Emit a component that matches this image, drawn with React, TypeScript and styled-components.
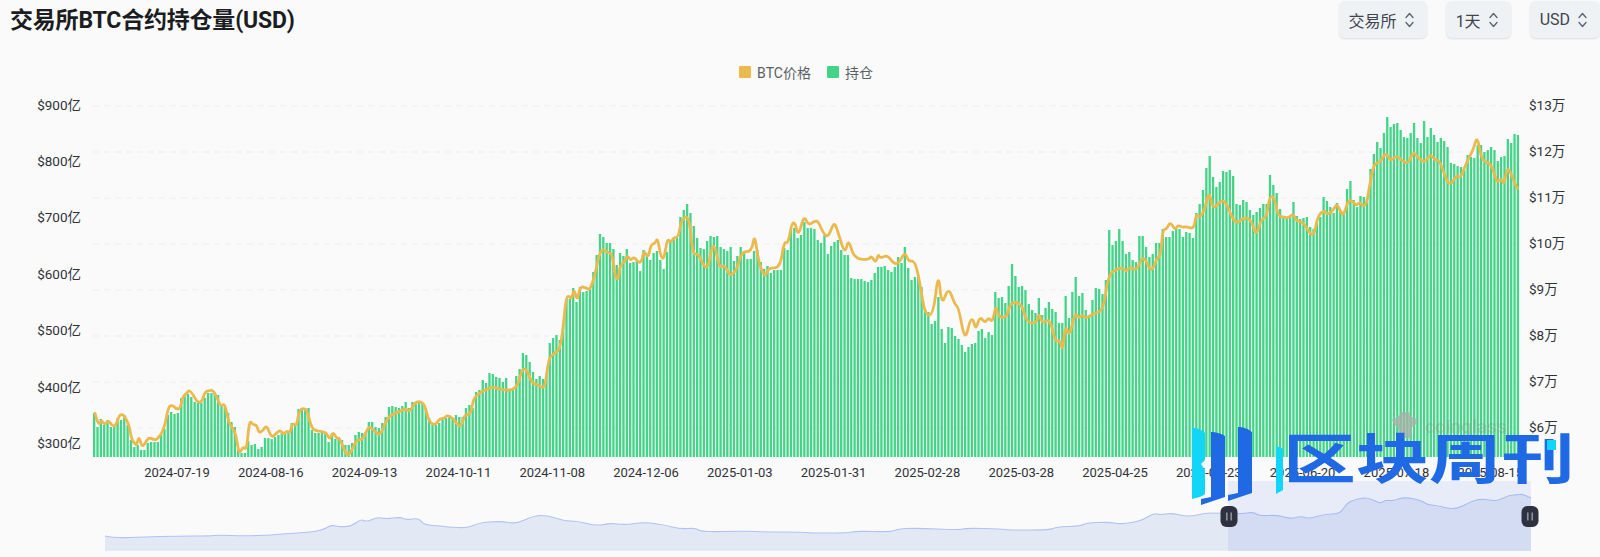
import { useMemo } from "react";
import styled, { createGlobalStyle } from "styled-components";

const FONT = `Roboto, "Noto Sans CJK SC", sans-serif`;

const BASELINE = 457;
const FIRST_BAR_X = 94;
const BAR_STEP = 3.35;

// open interest, top of each daily bar in chart px
const OI_TOPS = [
  413, 427, 419, 425, 420, 427, 425, 418, 420, 415, 425, 440, 447, 445, 450, 450, 443, 442, 442, 442,
  435, 429, 415, 412, 414, 413, 398, 396, 394, 397, 402, 403, 403, 398, 393, 393, 393, 395, 406, 407,
  413, 422, 427, 450, 453, 453, 441, 445, 444, 449, 447, 438, 438, 439, 437, 435, 433, 433, 433, 423,
  426, 409, 408, 408, 408, 430, 433, 433, 432, 432, 442, 433, 439, 437, 440, 445, 445, 443, 435, 432,
  433, 432, 422, 422, 427, 428, 423, 417, 407, 406, 407, 408, 406, 402, 408, 402, 403, 403, 403, 408,
  418, 425, 425, 423, 418, 418, 415, 418, 415, 417, 417, 408, 405, 408, 392, 390, 380, 383, 373, 374,
  377, 378, 382, 378, 390, 390, 376, 369, 353, 355, 362, 372, 379, 376, 379, 375, 343, 338, 335, 340,
  325, 299, 299, 288, 302, 287, 292, 291, 289, 272, 255, 234, 237, 243, 243, 249, 265, 253, 256, 249,
  263, 262, 260, 271, 250, 254, 260, 253, 251, 260, 269, 252, 242, 238, 238, 217, 210, 204, 213, 226,
  238, 248, 249, 241, 236, 237, 236, 247, 249, 251, 247, 261, 256, 247, 251, 259, 259, 251, 250, 262,
  269, 266, 273, 270, 270, 270, 248, 250, 228, 228, 238, 235, 222, 228, 228, 229, 240, 243, 235, 254,
  246, 242, 240, 250, 255, 255, 278, 279, 279, 279, 281, 282, 280, 273, 267, 267, 266, 270, 272, 267,
  257, 263, 247, 268, 280, 277, 276, 287, 309, 312, 324, 321, 297, 329, 343, 327, 328, 336, 339, 345,
  352, 347, 344, 343, 331, 329, 338, 332, 335, 292, 298, 297, 303, 286, 264, 276, 287, 286, 290, 304,
  310, 313, 298, 315, 308, 302, 309, 312, 323, 323, 296, 318, 292, 277, 296, 293, 310, 315, 300, 288,
  289, 294, 280, 230, 245, 241, 229, 241, 254, 252, 260, 262, 236, 236, 247, 257, 254, 243, 243, 229,
  237, 237, 231, 229, 229, 237, 232, 233, 238, 213, 204, 190, 168, 156, 177, 187, 182, 171, 172, 170,
  176, 204, 205, 200, 202, 210, 215, 212, 208, 204, 204, 175, 185, 193, 209, 217, 218, 217, 202, 216,
  219, 218, 217, 227, 229, 221, 217, 197, 201, 207, 213, 203, 210, 213, 189, 181, 200, 207, 196, 197,
  197, 169, 154, 142, 148, 133, 117, 127, 124, 123, 130, 137, 138, 133, 123, 138, 143, 121, 137, 128,
  135, 142, 138, 141, 147, 163, 164, 166, 167, 170, 155, 157, 158, 145, 145, 152, 150, 147, 150, 161,
  157, 156, 139, 143, 134, 135,
];

type Pt = [number, number];

// traced pieces of a curve, each measured at 3x from its own origin
const traced = (ox: number, oy: number, pts: Pt[]): Pt[] =>
  pts.map(([x, y]) => [ox + x / 3, oy + y / 3]);

const PRICE: Pt[] = [
  ...traced(90, 340, [
    [15, 220], [25, 258], [35, 240], [45, 255], [55, 240], [68, 260], [78, 255], [88, 225], [100, 223], [110, 240],
    [118, 260], [125, 298], [135, 312], [140, 315], [147, 288], [155, 320], [165, 312], [175, 292], [190, 298], [200, 300],
    [215, 280], [225, 255], [235, 200], [248, 195], [258, 207], [270, 207], [278, 170], [290, 160], [298, 150], [310, 165],
    [322, 187], [335, 187], [345, 155], [358, 152], [368, 150], [380, 170], [392, 200], [405, 190], [415, 245], [425, 260],
    [437, 280], [445, 330], [450, 338], [460, 320], [470, 330], [478, 240], [490, 255], [500, 255], [507, 280], [520, 270],
    [530, 255], [545, 295], [560, 278], [572, 270], [580, 285], [590, 272], [600, 280], [607, 248], [620, 260], [628, 207],
    [650, 205], [662, 255], [672, 272], [700, 275], [710, 280], [720, 300], [728, 275], [740, 295], [750, 295], [762, 330],
    [775, 350], [790, 320], [800, 300], [820, 298], [835, 258], [850, 270], [870, 288], [885, 250], [900, 225], [930, 215],
    [945, 205], [960, 215], [972, 190], [990, 183], [1005, 195], [1015, 240], [1030, 255], [1040, 250], [1050, 235], [1065, 235],
    [1070, 225], [1090, 235], [1105, 258], [1115, 255], [1125, 222], [1142, 225], [1150, 175], [1170, 158],
  ]),
  ...traced(480, 190, [
    [20, 598], [40, 590], [60, 600], [110, 600], [125, 540], [135, 535], [145, 550], [155, 578], [175, 585], [195, 598],
    [205, 505], [225, 488], [240, 478], [250, 410], [258, 322], [268, 318], [275, 328], [282, 295], [292, 335], [300, 288],
    [320, 295], [330, 300], [345, 255], [358, 190], [370, 175], [385, 190], [397, 190], [405, 262], [415, 270], [420, 225],
    [435, 215], [442, 195], [452, 212], [462, 200], [475, 218], [485, 215], [492, 180], [505, 205], [512, 165], [525, 160],
    [533, 143], [542, 200], [552, 208], [562, 145], [572, 158], [582, 142], [595, 142], [605, 85], [628, 78], [638, 195],
    [655, 190], [672, 230], [685, 232], [695, 170], [705, 168], [718, 235], [735, 225], [750, 260], [770, 240], [785, 185],
    [815, 185], [824, 130], [835, 215], [855, 265], [865, 232], [900, 235], [912, 155], [925, 160], [935, 100], [945, 97],
    [955, 140], [972, 75], [985, 107], [1005, 92], [1015, 95], [1030, 130], [1045, 142], [1062, 95], [1072, 120], [1095, 195],
    [1105, 145], [1122, 205], [1165, 210], [1175, 197], [1187, 220], [1195, 192],
  ]),
  ...traced(880, 130, [
    [0, 385], [22, 375], [40, 400], [55, 402], [75, 365], [85, 395], [105, 392], [120, 460], [135, 555], [160, 555],
    [175, 422], [185, 530], [205, 470], [225, 525], [235, 530], [255, 635], [270, 570], [280, 568], [287, 600], [300, 558],
    [315, 580], [325, 562], [338, 578], [347, 525], [355, 560], [380, 565], [392, 515], [425, 520], [440, 578], [470, 580],
    [477, 548], [487, 582], [510, 565], [525, 635], [540, 630], [548, 665], [556, 583], [568, 622], [585, 547], [597, 565],
    [605, 555], [620, 565], [640, 550], [670, 542], [685, 432], [715, 415], [730, 415], [740, 425], [748, 410], [770, 422],
    [785, 385], [795, 385], [810, 420], [820, 415], [830, 385], [842, 378], [848, 298], [860, 298], [870, 275], [885, 300],
    [895, 285], [905, 292], [920, 290], [942, 297], [948, 252], [962, 262], [975, 235], [988, 180], [998, 240], [1025, 210],
    [1040, 220], [1065, 285], [1095, 260], [1115, 272], [1128, 320], [1145, 265], [1160, 262], [1168, 200], [1183, 200], [1195, 260],
    [1210, 260], [1225, 265], [1240, 250], [1250, 275], [1270, 275], [1300, 328], [1312, 262],
  ]),
  ...traced(1300, 100, [
    [70, 330], [85, 345], [100, 330], [110, 312], [120, 330], [130, 350], [145, 298], [160, 305], [170, 318], [178, 305],
    [190, 320], [200, 310], [210, 250], [222, 190], [240, 188], [258, 155], [272, 185], [290, 165], [305, 182], [325, 192],
    [340, 153], [355, 175], [375, 188], [390, 162], [405, 180], [420, 183], [435, 230], [450, 258], [470, 225], [482, 235],
    [500, 185], [520, 150], [532, 105], [545, 185], [575, 190], [590, 250], [603, 235], [612, 255], [623, 197], [640, 240],
    [652, 265],
  ]),
];

const OVERVIEW: Pt[] = [
  [105, 536], [114, 538], [145, 537], [176, 536], [210, 536], [218, 535], [245, 536], [271, 535], [294, 533], [313, 532],
  [325, 529], [331, 525], [340, 527], [352, 526], [361, 519], [367, 522], [377, 517], [386, 519], [400, 517], [407, 520],
  [419, 518], [424, 525], [442, 526], [447, 527], [468, 528], [478, 523], [501, 521], [516, 524], [533, 516], [547, 515],
  [564, 521], [577, 521], [597, 526], [610, 523], [625, 525], [644, 522], [665, 525], [680, 529], [696, 528], [701, 532],
  [745, 531], [766, 532], [803, 532], [808, 533], [848, 533], [855, 531], [891, 532], [898, 529], [916, 528], [959, 530],
  [966, 528], [1001, 529], [1008, 530], [1051, 530], [1055, 527], [1082, 526], [1085, 523], [1109, 522], [1119, 524], [1130, 523],
  [1143, 520], [1154, 513], [1160, 515], [1171, 513], [1189, 517], [1205, 513], [1219, 513],
  [1240, 514], [1253, 512], [1260, 516], [1278, 515], [1290, 519], [1302, 516], [1308, 519], [1325, 514], [1340, 514],
  [1346, 504], [1353, 500], [1368, 497], [1380, 504], [1385, 500], [1393, 501], [1404, 497], [1420, 500], [1428, 505],
  [1435, 505], [1455, 510], [1470, 502], [1480, 499], [1490, 500], [1497, 501], [1510, 495], [1516, 495], [1522, 494], [1531, 498],
];

const smooth = (pts: Pt[]) => {
  let d = `M${pts[0][0]} ${pts[0][1]}`;
  for (let i = 1; i < pts.length - 1; i++) {
    const mx = (pts[i][0] + pts[i + 1][0]) / 2;
    const my = (pts[i][1] + pts[i + 1][1]) / 2;
    d += `Q${pts[i][0]} ${pts[i][1]} ${mx} ${my}`;
  }
  const last = pts[pts.length - 1];
  return `${d}L${last[0]} ${last[1]}`;
};

const LEFT_TICKS = ["$900亿", "$800亿", "$700亿", "$600亿", "$500亿", "$400亿", "$300亿"];
const RIGHT_TICKS = ["$13万", "$12万", "$11万", "$10万", "$9万", "$8万", "$7万", "$6万"];
const DATES = [
  "2024-07-19", "2024-08-16", "2024-09-13", "2024-10-11", "2024-11-08", "2024-12-06", "2025-01-03", "2025-01-31",
  "2025-02-28", "2025-03-28", "2025-04-25", "2025-05-23", "2025-06-20", "2025-07-18", "2025-08-15",
];

const GlobalStyle = createGlobalStyle`
  html, body {
    margin: 0;
    padding: 0;
    background: #fafafa;
  }
`;

const Page = styled.div`
  position: relative;
  width: 1600px;
  height: 557px;
  overflow: hidden;
  background: #fafafa;
  font-family: ${FONT};
`;

const Header = styled.header`
  display: flex;
  align-items: flex-start;
  justify-content: space-between;
  height: 40px;
  padding-left: 10px;
`;

const Title = styled.h1`
  margin: 5px 0 0;
  font-size: 23px;
  line-height: 32px;
  font-weight: 700;
  color: #1b1d22;
  letter-spacing: -0.2px;
`;

const Controls = styled.div`
  display: flex;
  gap: 19px;
  padding-top: 1px;
`;

const SelectButton = styled.button`
  display: flex;
  align-items: center;
  gap: 8px;
  height: 37px;
  padding: 0 13px 0 10px;
  border: none;
  border-radius: 6px;
  background: #eff2f5;
  box-shadow: 0 1px 2px rgba(30, 40, 60, 0.14);
  color: #3f444e;
  font: 400 16px ${FONT};
`;

const UpDown = styled.svg`
  display: block;
  width: 9px;
  height: 18px;
  fill: none;
  stroke: #5f6673;
  stroke-width: 1.4;
  stroke-linecap: round;
  stroke-linejoin: round;
`;

const Legend = styled.div`
  display: flex;
  justify-content: center;
  gap: 16px;
  height: 50px;
  padding: 23px 0 0 12px;
  box-sizing: border-box;
`;

const LegendItem = styled.div`
  display: flex;
  align-items: center;
  gap: 6px;
  height: 18px;
  font-size: 14px;
  color: #5a5f66;
`;

const Swatch = styled.span<{ $color: string }>`
  width: 12px;
  height: 12px;
  border-radius: 1px;
  background: ${(p) => p.$color};
`;

const ChartSvg = styled.svg`
  display: block;
  width: 1600px;
  height: 467px;
`;

const AxisText = styled.text<{ $size?: number }>`
  font-family: ${FONT};
  font-size: ${(p) => p.$size ?? 13}px;
  fill: #2f3238;
`;

const Watermark = styled.text`
  font-family: ${FONT};
  font-size: 19px;
  font-weight: 500;
  fill: #8b948e;
  fill-opacity: 0.35;
`;

const Logo = styled.div`
  position: absolute;
  left: 1190px;
  top: 416px;
  display: flex;
  align-items: flex-start;
`;

const LogoMark = styled.svg`
  display: block;
  width: 100px;
  height: 90px;
`;

const LogoText = styled.div`
  position: absolute;
  left: 93px;
  top: 9px;
  width: 232px;
  font-family: "Noto Sans CJK SC", sans-serif;
  font-size: 54px;
  line-height: 62px;
  font-weight: 700;
  white-space: nowrap;
  color: #1f6ae4;
  transform: scaleX(1.35);
  transform-origin: left top;
`;

const LogoDot = styled.span`
  position: absolute;
  left: 357px;
  top: 24px;
  width: 9px;
  height: 10px;
  background: #12d6f8;
`;

const Chevrons = () => (
  <UpDown viewBox="0 0 9 18">
    <path d="M1 6.5 4.5 2.5 8 6.5" />
    <path d="M1 11.5 4.5 15.5 8 11.5" />
  </UpDown>
);

const SliderHandle = ({ x }: { x: number }) => (
  <g>
    <rect x={x - 8.5} y={506} width={17} height={21} rx={6} fill="#2e3140" />
    <rect x={x - 3} y={512.5} width={1.6} height={8} fill="#8d909b" />
    <rect x={x + 1.4} y={512.5} width={1.6} height={8} fill="#8d909b" />
  </g>
);

const OpenInterestChart = () => {
  const pricePath = useMemo(() => smooth(PRICE), []);
  const overviewPath = useMemo(() => smooth(OVERVIEW), []);

  return (
    <ChartSvg viewBox="0 90 1600 467">
      {RIGHT_TICKS.map((label, i) => (
        <line key={label} x1={93} x2={1519} y1={106 + i * 46} y2={106 + i * 46} stroke="#eeeeee" strokeDasharray="6 5" />
      ))}
      {OI_TOPS.map((top, i) => (
        <rect
          key={i}
          x={FIRST_BAR_X + i * BAR_STEP - 1}
          y={top}
          width={2.3}
          height={BASELINE - top}
          fill="#43d488"
        />
      ))}
      <path d={pricePath} fill="none" stroke="#ecb94f" strokeWidth={2.8} strokeLinejoin="round" strokeLinecap="round" />

      <g fill="#a7b2aa" fillOpacity={0.8}>
        <path d="M1392 419c5-1 8-3 9-7h8c1 4 4 6 9 7-1 5-3 7-6 8l-1 11h-12l-1-11c-3-1-5-3-6-8z" />
      </g>
      <Watermark x={1425} y={433}>coinglass</Watermark>

      {LEFT_TICKS.map((label, i) => (
        <AxisText key={label} $size={13.5} x={81} y={109.5 + i * 56.4} textAnchor="end">{label}</AxisText>
      ))}
      {RIGHT_TICKS.map((label, i) => (
        <AxisText key={label} $size={13.5} x={1529} y={109.5 + i * 46}>{label}</AxisText>
      ))}
      {DATES.map((label, i) => (
        <AxisText key={label} x={177 + i * 93.8} y={477} textAnchor="middle">{label}</AxisText>
      ))}

      <path d={`${overviewPath}L1531 551L105 551Z`} fill="#e3e8f5" />
      <path d={overviewPath} fill="none" stroke="#b0c3f2" strokeWidth={1.1} />
      <rect x={1228} y={481} width={303} height={70} fill="#6d8cf0" fillOpacity={0.12} />
      <SliderHandle x={1229} />
      <SliderHandle x={1530} />
    </ChartSvg>
  );
};

export default function App() {
  return (
    <Page>
      <GlobalStyle />
      <Header>
        <Title>交易所BTC合约持仓量(USD)</Title>
        <Controls>
          <SelectButton>交易所<Chevrons /></SelectButton>
          <SelectButton>1天<Chevrons /></SelectButton>
          <SelectButton>USD<Chevrons /></SelectButton>
        </Controls>
      </Header>
      <Legend>
        <LegendItem><Swatch $color="#ecb94f" />BTC价格</LegendItem>
        <LegendItem><Swatch $color="#43d488" />持仓</LegendItem>
      </Legend>
      <OpenInterestChart />
      <Logo>
        <LogoMark viewBox="0 0 100 90">
          <path d="M2 12c5 0 11 2 13 5v27l-4 4 4 6v24c-2 2-8 4-13 5z" fill="#12d6f8" />
          <path d="M21 16c5 0 11 2 14 4v61l-24 8v-6l10-2z" fill="#1f6ae4" />
          <path d="M48 11c5 0 11 2 14 5v61l-24 8v-6l10-2z" fill="#1f6ae4" />
          <path d="M86 30c3 1 6 2 7 3v41c-2 1-5 3-7 4z" fill="#12d6f8" />
        </LogoMark>
        <LogoText>区块周刊</LogoText>
        <LogoDot />
      </Logo>
    </Page>
  );
}
